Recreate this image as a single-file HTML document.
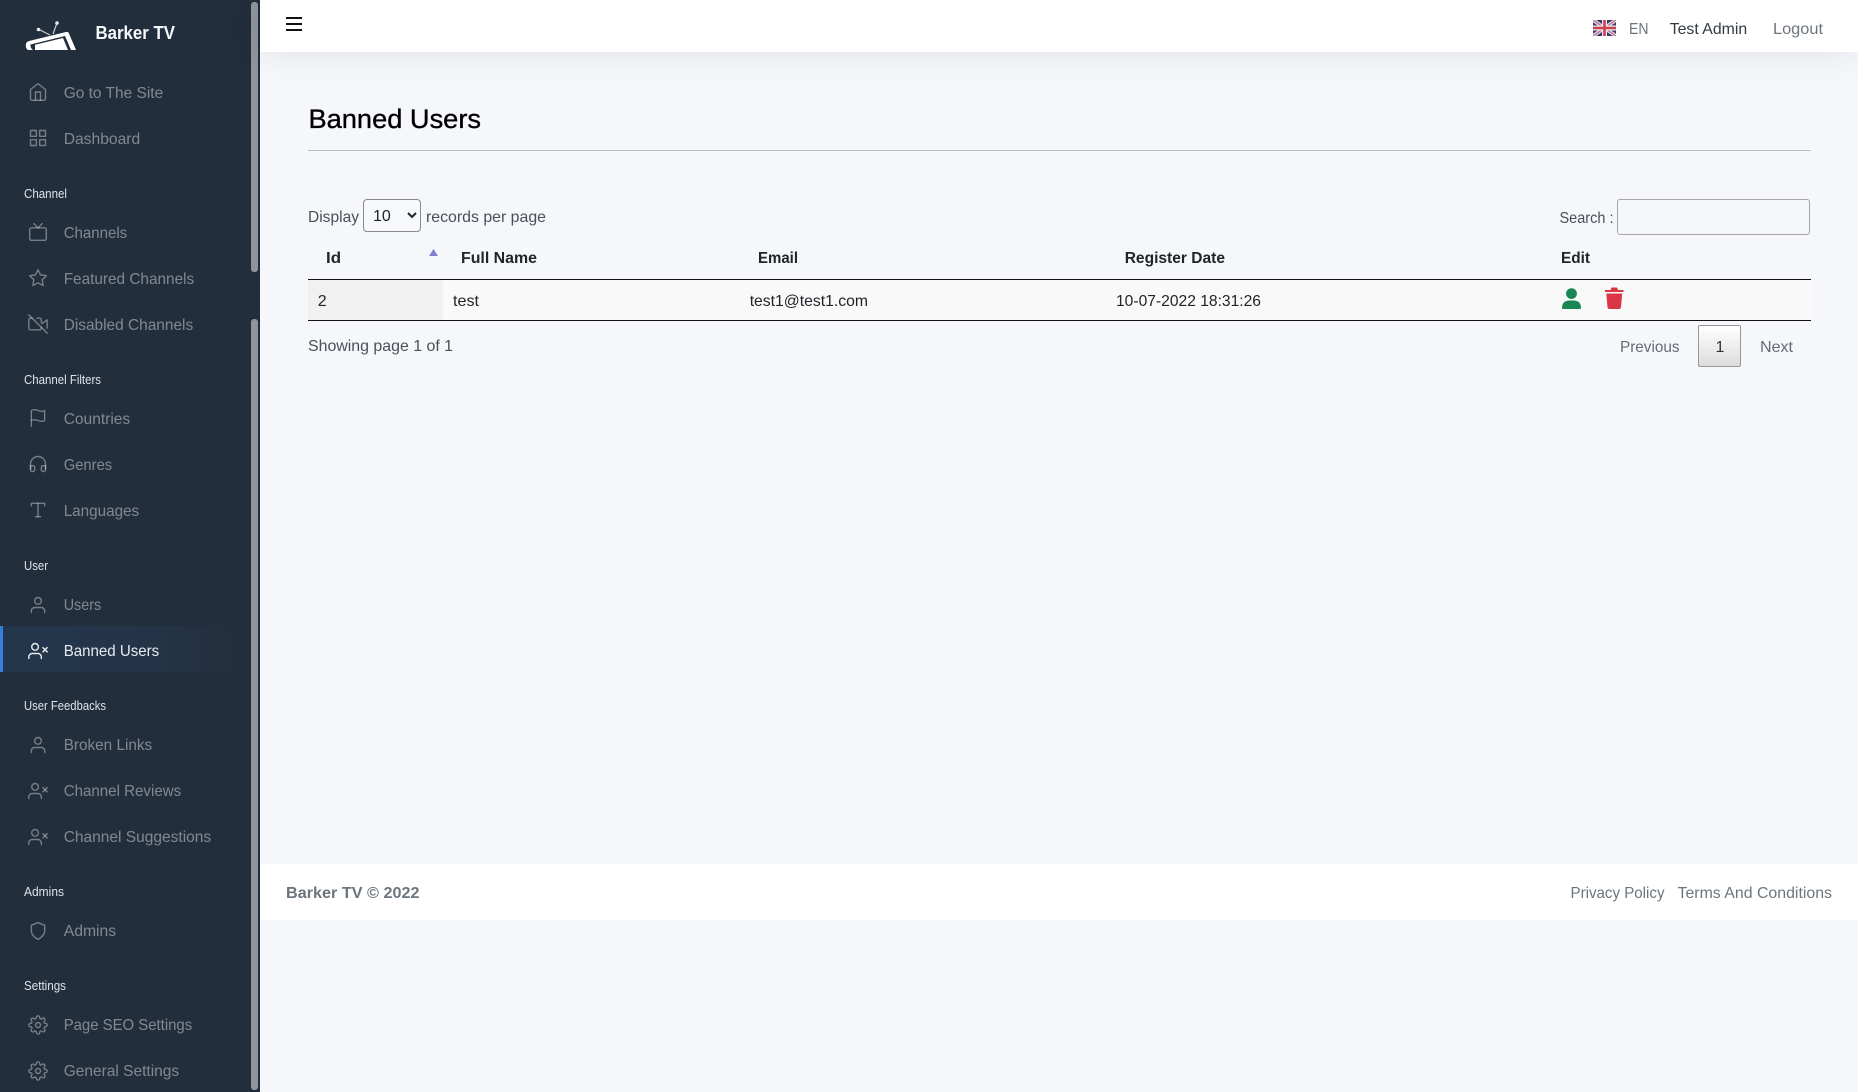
<!DOCTYPE html>
<html lang="en">
<head>
<meta charset="utf-8">
<title>Banned Users - Barker TV</title>
<style>
html,body{margin:0;padding:0;width:1858px;height:1092px;overflow:hidden;background:#f5f7fb;font-family:"Liberation Sans",Arial,sans-serif}
.side{position:absolute;left:0;top:0;width:260px;height:1092px;background:#222e3c}
.thumb{position:absolute;left:251px;width:7px;background:#8e959d;border-radius:3px}
.active{position:absolute;left:0;top:626px;width:251px;height:46px;box-sizing:border-box;border-left:3px solid #3b7ddd;background:linear-gradient(90deg,rgba(59,125,221,.1),rgba(59,125,221,.0875) 50%,rgba(0,0,0,0))}
.top{position:absolute;left:260px;top:0;width:1598px;height:52px;background:#fff;box-shadow:0 0 32px 0 rgba(33,37,41,.1)}
.foot{position:absolute;left:260px;top:864px;width:1598px;height:56px;background:#fff}
.rule{position:absolute;left:308px;top:150px;width:1503px;height:1px;background:#bdbfc2}
.row{position:absolute;left:308px;top:279px;width:1503px;height:42px;box-sizing:border-box;background:#f9f9f9;border-top:1px solid #111;border-bottom:1px solid #111}
.sorted{position:absolute;left:308px;top:280px;width:135px;height:40px;background:#f1f1f1}
select{position:absolute;left:363px;top:199px;width:58px;height:33px;box-sizing:border-box;border:1px solid #8a8a8a;border-radius:4px;background:#f7f8fb;color:#212529;font:16px "Liberation Sans",Arial,sans-serif;padding:2px 0 0 5px;margin:0}
input{position:absolute;left:1617px;top:199px;width:193px;height:36px;box-sizing:border-box;border:1px solid #a6a6a6;border-radius:3px;background:#f5f7fb;margin:0;padding:0}
.pg{position:absolute;left:1698px;top:325px;width:43px;height:42px;box-sizing:border-box;border:1px solid #979797;border-radius:2px;background:linear-gradient(#fff,#dcdcdc)}
svg.ov{position:absolute;left:0;top:0}
.i{fill:none;stroke:rgba(233,236,239,.42);stroke-width:1.7;stroke-linecap:round;stroke-linejoin:round}
.ia{fill:none;stroke:#e9ecef;stroke-width:1.7;stroke-linecap:round;stroke-linejoin:round}
text{font-family:"Liberation Sans",Arial,sans-serif;font-size:16px}
.n{fill:rgba(233,236,239,.47)}
.h{fill:#dfe3e7;font-size:13px}
.d{fill:#212529}
.g{fill:#6c757d}
.b{font-weight:700;fill:#212529}
</style>
</head>
<body>
<div class="side"></div>
<div class="active"></div>
<div class="thumb" style="top:2px;height:270px"></div>
<div class="thumb" style="top:319px;height:771px"></div>
<div class="top"></div>
<div class="rule"></div>
<div class="row"></div>
<div class="sorted"></div>
<div class="foot"></div>
<select><option>10</option></select>
<input type="text">
<div class="pg"></div>

<svg class="ov" width="1858" height="1092" viewBox="0 0 1858 1092" xmlns="http://www.w3.org/2000/svg">
<defs>
<symbol id="home" viewBox="0 0 24 24"><path d="M3 9l9-7 9 7v11a2 2 0 0 1-2 2H5a2 2 0 0 1-2-2z"/><polyline points="9 22 9 12 15 12 15 22"/></symbol>
<symbol id="grid" viewBox="0 0 24 24"><rect x="3" y="3" width="7" height="7"/><rect x="14" y="3" width="7" height="7"/><rect x="14" y="14" width="7" height="7"/><rect x="3" y="14" width="7" height="7"/></symbol>
<symbol id="tv" viewBox="0 0 24 24"><rect x="2" y="7" width="20" height="15" rx="2" ry="2"/><polyline points="17 2 12 7 7 2"/></symbol>
<symbol id="star" viewBox="0 0 24 24"><polygon points="12 2 15.09 8.26 22 9.27 17 14.14 18.18 21.02 12 17.77 5.82 21.02 7 14.14 2 9.27 8.91 8.26 12 2"/></symbol>
<symbol id="voff" viewBox="0 0 24 24"><path d="M16 16v1a2 2 0 0 1-2 2H3a2 2 0 0 1-2-2V7a2 2 0 0 1 2-2h2m5.66 0H14a2 2 0 0 1 2 2v3.34l1 1L23 7v10"/><line x1="1" y1="1" x2="23" y2="23"/></symbol>
<symbol id="flag" viewBox="0 0 24 24"><path d="M4 15s1-1 4-1 5 2 8 2 4-1 4-1V3s-1 1-4 1-5-2-8-2-4 1-4 1z"/><line x1="4" y1="22" x2="4" y2="15"/></symbol>
<symbol id="head" viewBox="0 0 24 24"><path d="M3 18v-6a9 9 0 0 1 18 0v6"/><path d="M21 19a2 2 0 0 1-2 2h-1a2 2 0 0 1-2-2v-3a2 2 0 0 1 2-2h3zM3 19a2 2 0 0 0 2 2h1a2 2 0 0 0 2-2v-3a2 2 0 0 0-2-2H3z"/></symbol>
<symbol id="type" viewBox="0 0 24 24"><polyline points="4 7 4 4 20 4 20 7"/><line x1="9" y1="20" x2="15" y2="20"/><line x1="12" y1="4" x2="12" y2="20"/></symbol>
<symbol id="user" viewBox="0 0 24 24"><path d="M20 21v-2a4 4 0 0 0-4-4H8a4 4 0 0 0-4 4v2"/><circle cx="12" cy="7" r="4"/></symbol>
<symbol id="userx" viewBox="0 0 24 24"><path d="M16 21v-2a4 4 0 0 0-4-4H5a4 4 0 0 0-4 4v2"/><circle cx="8.5" cy="7" r="4"/><line x1="18" y1="8" x2="23" y2="13"/><line x1="23" y1="8" x2="18" y2="13"/></symbol>
<symbol id="shield" viewBox="0 0 24 24"><path d="M12 22s8-4 8-10V5l-8-3-8 3v7c0 6 8 10 8 10z"/></symbol>
<symbol id="gear" viewBox="0 0 24 24"><circle cx="12" cy="12" r="3"/><path d="M19.4 15a1.65 1.65 0 0 0 .33 1.82l.06.06a2 2 0 0 1 0 2.83 2 2 0 0 1-2.83 0l-.06-.06a1.65 1.65 0 0 0-1.82-.33 1.65 1.65 0 0 0-1 1.51V21a2 2 0 0 1-2 2 2 2 0 0 1-2-2v-.09A1.65 1.65 0 0 0 9 19.4a1.65 1.65 0 0 0-1.82.33l-.06.06a2 2 0 0 1-2.83 0 2 2 0 0 1 0-2.83l.06-.06a1.65 1.65 0 0 0 .33-1.82 1.65 1.65 0 0 0-1.51-1H3a2 2 0 0 1-2-2 2 2 0 0 1 2-2h.09A1.65 1.65 0 0 0 4.6 9a1.65 1.65 0 0 0-.33-1.82l-.06-.06a2 2 0 0 1 0-2.83 2 2 0 0 1 2.83 0l.06.06a1.65 1.65 0 0 0 1.82.33H9a1.65 1.65 0 0 0 1-1.51V3a2 2 0 0 1 2-2 2 2 0 0 1 2 2v.09a1.65 1.65 0 0 0 1 1.51 1.65 1.65 0 0 0 1.82-.33l.06-.06a2 2 0 0 1 2.83 0 2 2 0 0 1 0 2.83l-.06.06a1.65 1.65 0 0 0-.33 1.82V9a1.65 1.65 0 0 0 1.51 1H21a2 2 0 0 1 2 2 2 2 0 0 1-2 2h-.09a1.65 1.65 0 0 0-1.51 1z"/></symbol>
<clipPath id="fc"><rect x="1593" y="20" width="23" height="16" rx="1"/></clipPath>
</defs>

<!-- logo -->
<g>
<path d="M38 29 L50 35 M57 23 L53 34" stroke="#c9ced3" stroke-width="1.2" fill="none"/>
<circle cx="38.5" cy="29.5" r="1.8" fill="#e8eaec"/><circle cx="57" cy="23" r="1.8" fill="#e8eaec"/>
<path d="M26 44 Q26 42 29 41 L66 32 Q68 31.5 69 33.5 L76 50 L28 50 Q25 48 26 44 Z" fill="#fff"/>
<path d="M30.5 44.5 L65 36 L71 50 L33 50 Q30 48 30.5 44.5 Z" fill="#222e3c"/>
<path d="M35 44.8 L63 38 L68 50 L35 50 Z" fill="#fff"/>
</g>
<text x="95.5" y="39" textLength="79.5" lengthAdjust="spacingAndGlyphs" style="font-size:18px;font-weight:700;fill:#f8f9fa">Barker TV</text>

<!-- sidebar icons -->
<g class="i">
<use href="#home" x="28" y="82" width="20" height="20"/>
<use href="#grid" x="28" y="128" width="20" height="20"/>
<use href="#tv" x="28" y="222" width="20" height="20"/>
<use href="#star" x="28" y="268" width="20" height="20"/>
<use href="#voff" x="28" y="314" width="20" height="20"/>
<use href="#flag" x="28" y="408" width="20" height="20"/>
<use href="#head" x="28" y="454" width="20" height="20"/>
<use href="#type" x="28" y="500" width="20" height="20"/>
<use href="#user" x="28" y="595" width="20" height="20"/>
<use href="#user" x="28" y="735" width="20" height="20"/>
<use href="#userx" x="28" y="781" width="20" height="20"/>
<use href="#userx" x="28" y="827" width="20" height="20"/>
<use href="#shield" x="28" y="921" width="20" height="20"/>
<use href="#gear" x="28" y="1015" width="20" height="20"/>
<use href="#gear" x="28" y="1061" width="20" height="20"/>
</g>
<g class="ia"><use href="#userx" x="28" y="641" width="20" height="20"/></g>

<!-- sidebar text -->
<g class="n">
<text x="63.7" y="98" textLength="99.5" lengthAdjust="spacingAndGlyphs">Go to The Site</text>
<text x="63.7" y="144" textLength="76.5" lengthAdjust="spacingAndGlyphs">Dashboard</text>
<text x="63.7" y="238" textLength="63.5" lengthAdjust="spacingAndGlyphs">Channels</text>
<text x="63.7" y="284" textLength="130.5" lengthAdjust="spacingAndGlyphs">Featured Channels</text>
<text x="63.7" y="330" textLength="129.5" lengthAdjust="spacingAndGlyphs">Disabled Channels</text>
<text x="63.7" y="424" textLength="66.5" lengthAdjust="spacingAndGlyphs">Countries</text>
<text x="63.7" y="470" textLength="48.5" lengthAdjust="spacingAndGlyphs">Genres</text>
<text x="63.7" y="516" textLength="75.5" lengthAdjust="spacingAndGlyphs">Languages</text>
<text x="63.7" y="610" textLength="37.5" lengthAdjust="spacingAndGlyphs">Users</text>
<text x="63.7" y="750" textLength="88.5" lengthAdjust="spacingAndGlyphs">Broken Links</text>
<text x="63.7" y="796" textLength="117.5" lengthAdjust="spacingAndGlyphs">Channel Reviews</text>
<text x="63.7" y="842" textLength="147.5" lengthAdjust="spacingAndGlyphs">Channel Suggestions</text>
<text x="63.7" y="936" textLength="52.5" lengthAdjust="spacingAndGlyphs">Admins</text>
<text x="63.7" y="1030" textLength="128.5" lengthAdjust="spacingAndGlyphs">Page SEO Settings</text>
<text x="63.7" y="1076" textLength="115.5" lengthAdjust="spacingAndGlyphs">General Settings</text>
</g>
<text x="63.7" y="656" textLength="95.5" lengthAdjust="spacingAndGlyphs" style="fill:#e9ecef">Banned Users</text>
<g>
<text class="h" x="24" y="198" textLength="43" lengthAdjust="spacingAndGlyphs">Channel</text>
<text class="h" x="24" y="384" textLength="77" lengthAdjust="spacingAndGlyphs">Channel Filters</text>
<text class="h" x="24" y="570" textLength="24" lengthAdjust="spacingAndGlyphs">User</text>
<text class="h" x="24" y="710" textLength="82" lengthAdjust="spacingAndGlyphs">User Feedbacks</text>
<text class="h" x="24" y="896" textLength="40" lengthAdjust="spacingAndGlyphs">Admins</text>
<text class="h" x="24" y="990" textLength="42" lengthAdjust="spacingAndGlyphs">Settings</text>
</g>

<!-- hamburger -->
<rect x="286" y="17" width="16" height="2" fill="#111"/>
<rect x="286" y="23" width="16" height="2" fill="#111"/>
<rect x="286" y="29" width="16" height="2" fill="#111"/>

<!-- flag -->
<g clip-path="url(#fc)">
<rect x="1593" y="20" width="23" height="16" fill="#3a3872"/>
<path d="M1593 20 L1616 36 M1616 20 L1593 36" stroke="#ddd6e4" stroke-width="3.6"/>
<path d="M1593 20 L1616 36 M1616 20 L1593 36" stroke="#c2596a" stroke-width="1"/>
<path d="M1604.5 20 V36 M1593 28 H1616" stroke="#f1ecef" stroke-width="5"/>
<path d="M1604.5 20 V36 M1593 28 H1616" stroke="#c8404d" stroke-width="2.6"/>
</g>

<!-- topbar text -->
<text class="g" x="1629" y="34" textLength="19.5" lengthAdjust="spacingAndGlyphs">EN</text>
<text x="1669.7" y="34" textLength="77.5" lengthAdjust="spacingAndGlyphs" style="fill:#343a40">Test Admin</text>
<text class="g" x="1773" y="34" textLength="50" lengthAdjust="spacingAndGlyphs">Logout</text>

<!-- title -->
<text x="308.5" y="128" textLength="172.5" lengthAdjust="spacingAndGlyphs" style="font-size:27px;fill:#000;stroke:#000;stroke-width:.35">Banned Users</text>

<!-- controls -->
<text class="d" x="308" y="222" textLength="51" lengthAdjust="spacingAndGlyphs" style="fill:#495057">Display</text>
<text class="d" x="426" y="222" textLength="120" lengthAdjust="spacingAndGlyphs" style="fill:#495057">records per page</text>
<text class="d" x="1559.5" y="223" textLength="54" lengthAdjust="spacingAndGlyphs" style="fill:#495057">Search :</text>

<!-- table head -->
<text class="b" x="326" y="263" textLength="15" lengthAdjust="spacingAndGlyphs">Id</text>
<path d="M433.5 249 L438 256 H429 Z" fill="#7f80d8"/>
<text class="b" x="461" y="263" textLength="76" lengthAdjust="spacingAndGlyphs">Full Name</text>
<text class="b" x="758" y="263" textLength="40" lengthAdjust="spacingAndGlyphs">Email</text>
<text class="b" x="1124.7" y="263" textLength="100.3" lengthAdjust="spacingAndGlyphs">Register Date</text>
<text class="b" x="1561" y="263" textLength="29" lengthAdjust="spacingAndGlyphs">Edit</text>

<!-- table row -->
<text class="d" x="317.7" y="306">2</text>
<text class="d" x="453" y="306" textLength="26" lengthAdjust="spacingAndGlyphs">test</text>
<text class="d" x="749.7" y="306" textLength="118.3" lengthAdjust="spacingAndGlyphs">test1@test1.com</text>
<text class="d" x="1116" y="306" textLength="145" lengthAdjust="spacingAndGlyphs">10-07-2022 18:31:26</text>

<circle cx="1571.5" cy="293.6" r="5.4" fill="#198754"/>
<path d="M1562 308 Q1562 301 1569 300.5 H1574 Q1581 301 1581 308 Q1581 309 1580 309 H1563 Q1562 309 1562 308 Z" fill="#198754"/>
<path d="M1605 290 H1610.5 L1611.5 287.5 H1617 L1618 290 H1623.5 V292 H1605 Z" fill="#dc3545"/>
<path d="M1606.3 293.5 H1622.2 L1621 307 Q1620.8 309 1618.8 309 H1609.7 Q1607.7 309 1607.5 307 Z" fill="#dc3545"/>

<!-- footer of table -->
<text class="d" x="308" y="351" textLength="145" lengthAdjust="spacingAndGlyphs" style="fill:#495057">Showing page 1 of 1</text>
<text x="1620" y="352" textLength="59.5" lengthAdjust="spacingAndGlyphs" style="fill:#666c75">Previous</text>
<text class="d" x="1715.5" y="352" style="fill:#333">1</text>
<text x="1760" y="352" textLength="33" lengthAdjust="spacingAndGlyphs" style="fill:#666c75">Next</text>

<!-- page footer -->
<text x="286" y="898" textLength="133.5" lengthAdjust="spacingAndGlyphs" style="font-weight:700;fill:#6c757d">Barker TV © 2022</text>
<text class="g" x="1570.5" y="898" textLength="94" lengthAdjust="spacingAndGlyphs">Privacy Policy</text>
<text class="g" x="1677.5" y="898" textLength="154.5" lengthAdjust="spacingAndGlyphs">Terms And Conditions</text>
</svg>
</body>
</html>
